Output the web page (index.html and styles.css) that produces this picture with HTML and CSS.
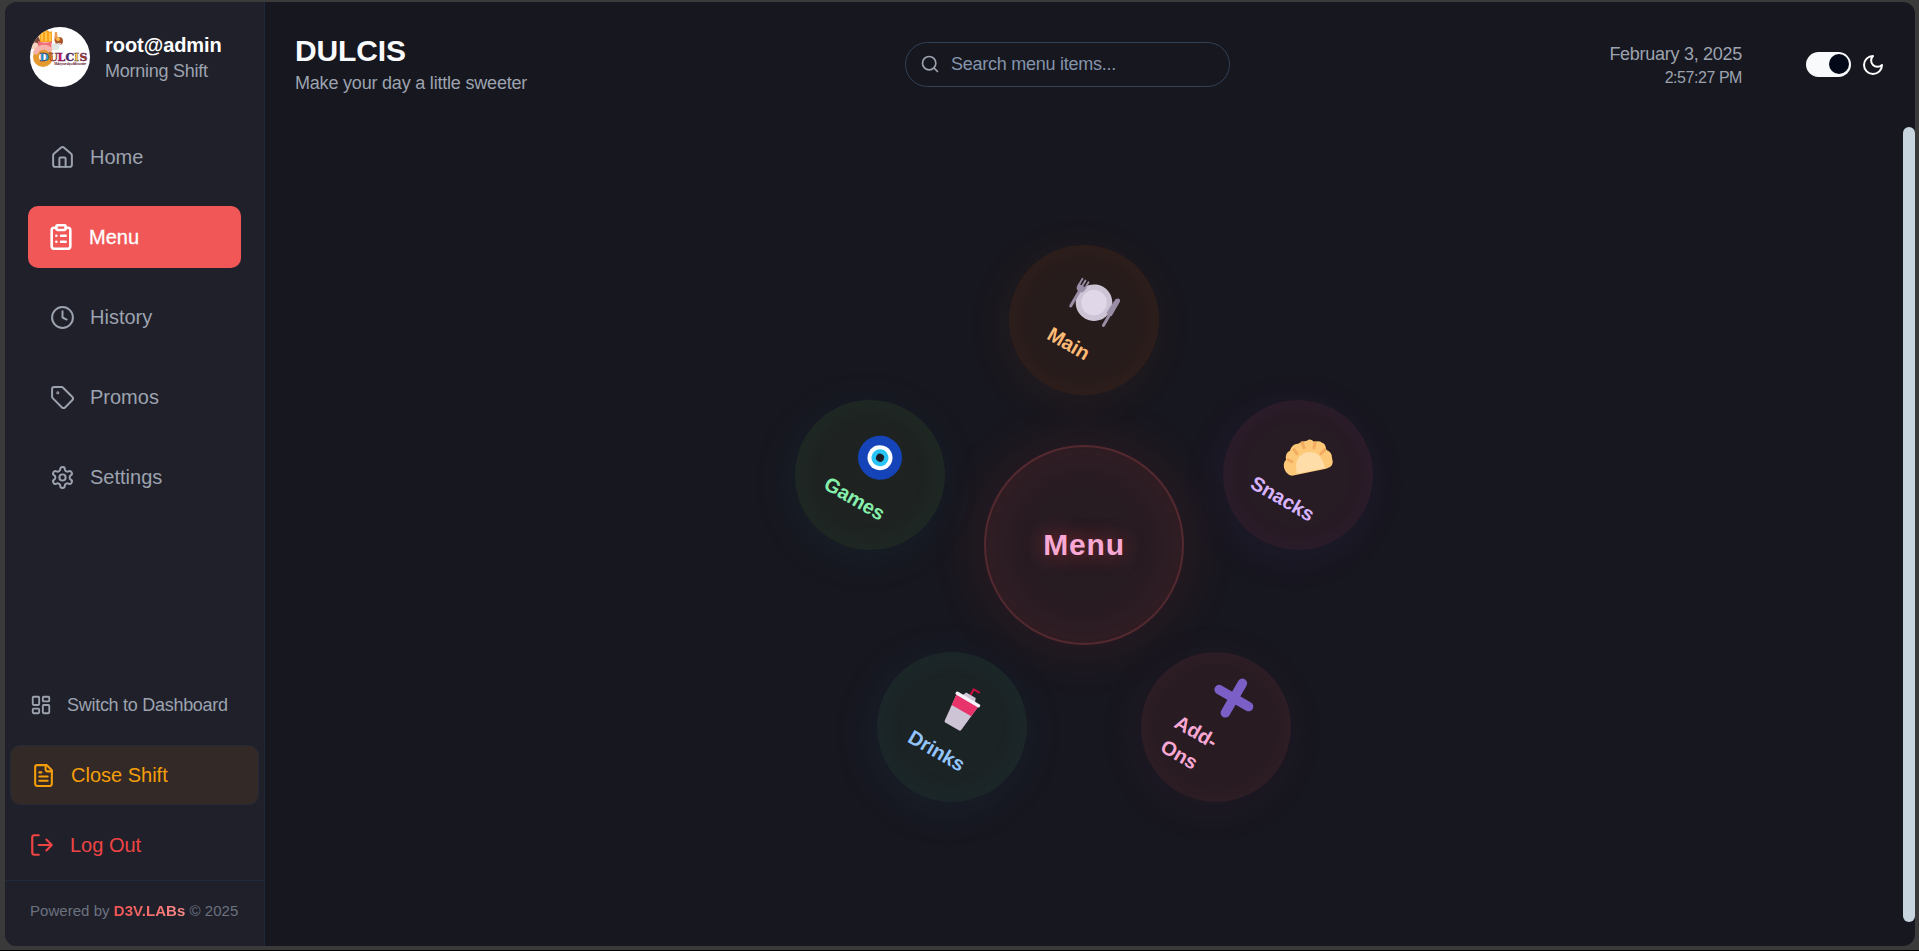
FILE: index.html
```html
<!DOCTYPE html>
<html lang="en">
<head>
<meta charset="utf-8">
<title>DULCIS</title>
<link rel="stylesheet" href="styles.css">
</head>
<body>
<div class="app">
  <aside class="sidebar">
    <div class="profile">
      <svg class="avatar" viewBox="0 0 60 60">
        <defs><clipPath id="round"><circle cx="30" cy="30" r="30"/></clipPath></defs>
        <g clip-path="url(#round)">
          <rect width="60" height="60" fill="#fff"/>
          <path d="M1 15l7-6 4 8-5 5-7-1z" fill="#7b4636"/>
          <circle cx="5" cy="19" r="3.500" fill="#f3d3bd"/>
          <path d="M9 6l2-2 3 1 3-2 3 2 2-1v11H10z" fill="#f9a21d"/>
          <path d="M12 6v8M16 5v9M20 6v8" stroke="#ffd35c" stroke-width="1.400"/>
          <path d="M8 14q8 3 14 0l-1 13H9z" fill="#f36f78"/>
          <path d="M25 5l2 0 1 9-4 0z" fill="#ef9a55"/>
          <circle cx="29" cy="14" r="4" fill="#a9562c"/>
          <path d="M21 17l10-1-3 7h-5z" fill="#dfe6e4"/>
          <circle cx="28" cy="12" r="2" fill="#f8b64b"/>
          <circle cx="13" cy="30" r="7" fill="none" stroke="#e59a2f" stroke-width="6"/>
          <path d="M5 27a9 9 0 0 1 16-3" fill="none" stroke="#f6b3ac" stroke-width="5"/>
        </g>
        <g class="avatar-word" stroke="#51204a" stroke-width=".4">
          <text x="9.500" y="33.500" fill="#1fa9dc">D</text><text x="18.500" y="33.500" fill="#ef7d28">U</text><text x="27.500" y="33.500" fill="#d90f6c">L</text><text x="35.500" y="33.500" fill="#3c2a7c">C</text><text x="44" y="33.500" fill="#f8d33b">I</text><text x="49.500" y="33.500" fill="#a43a2b">S</text>
        </g>
        <text class="avatar-tag" x="24" y="37.500" textLength="32">Make your day a little sweeter</text>
      </svg>
      <div class="who">
        <div class="user">root@admin</div>
        <div class="shift">Morning Shift</div>
      </div>
    </div>

    <nav class="nav">
      <a class="nav-item"><svg class="icon" viewBox="0 0 24 24"><path d="M15 21v-8a1 1 0 0 0-1-1h-4a1 1 0 0 0-1 1v8"/><path d="M3 10a2 2 0 0 1 .709-1.528l7-5.999a2 2 0 0 1 2.582 0l7 5.999A2 2 0 0 1 21 10v9a2 2 0 0 1-2 2H5a2 2 0 0 1-2-2z"/></svg><span>Home</span></a>
      <a class="nav-item active"><svg class="icon" viewBox="0 0 24 24"><rect width="8" height="4" x="8" y="2" rx="1"/><path d="M16 4h2a2 2 0 0 1 2 2v14a2 2 0 0 1-2 2H6a2 2 0 0 1-2-2V6a2 2 0 0 1 2-2h2M12 11h4M12 16h4M8 11h.01M8 16h.01"/></svg><span>Menu</span></a>
      <a class="nav-item"><svg class="icon" viewBox="0 0 24 24"><circle cx="12" cy="12" r="10"/><path d="M12 6v6l4 2"/></svg><span>History</span></a>
      <a class="nav-item"><svg class="icon" viewBox="0 0 24 24"><path d="M12.586 2.586A2 2 0 0 0 11.172 2H4a2 2 0 0 0-2 2v7.172a2 2 0 0 0 .586 1.414l8.704 8.704a2.426 2.426 0 0 0 3.420 0l6.580-6.580a2.426 2.426 0 0 0 0-3.420z"/><circle cx="7.500" cy="7.500" r=".5"/></svg><span>Promos</span></a>
      <a class="nav-item"><svg class="icon" viewBox="0 0 24 24"><path d="M12.220 2h-.44a2 2 0 0 0-2 2v.18a2 2 0 0 1-1 1.730l-.43.250a2 2 0 0 1-2 0l-.15-.08a2 2 0 0 0-2.730.730l-.22.380a2 2 0 0 0 .730 2.730l.150.100a2 2 0 0 1 1 1.720v.510a2 2 0 0 1-1 1.740l-.15.090a2 2 0 0 0-.73 2.730l.220.380a2 2 0 0 0 2.730.730l.150-.08a2 2 0 0 1 2 0l.430.250a2 2 0 0 1 1 1.730V20a2 2 0 0 0 2 2h.440a2 2 0 0 0 2-2v-.18a2 2 0 0 1 1-1.730l.430-.25a2 2 0 0 1 2 0l.150.080a2 2 0 0 0 2.730-.73l.220-.39a2 2 0 0 0-.73-2.730l-.15-.08a2 2 0 0 1-1-1.740v-.5a2 2 0 0 1 1-1.740l.150-.09a2 2 0 0 0 .730-2.730l-.22-.38a2 2 0 0 0-2.730-.73l-.15.080a2 2 0 0 1-2 0l-.43-.25a2 2 0 0 1-1-1.730V4a2 2 0 0 0-2-2z"/><circle cx="12" cy="12" r="3"/></svg><span>Settings</span></a>
    </nav>

    <div class="actions">
      <a class="action switch-view"><svg class="icon" viewBox="0 0 24 24"><rect width="7" height="9" x="3" y="3" rx="1"/><rect width="7" height="5" x="14" y="3" rx="1"/><rect width="7" height="9" x="14" y="12" rx="1"/><rect width="7" height="5" x="3" y="16" rx="1"/></svg><span>Switch to Dashboard</span></a>
      <a class="action close-shift"><svg class="icon" viewBox="0 0 24 24"><path d="M15 2H6a2 2 0 0 0-2 2v16a2 2 0 0 0 2 2h12a2 2 0 0 0 2-2V7z"/><path d="M14 2v4a2 2 0 0 0 2 2h4M10 9H8M16 13H8M16 17H8"/></svg><span>Close Shift</span></a>
      <a class="action logout"><svg class="icon" viewBox="0 0 24 24"><path d="M9 21H5a2 2 0 0 1-2-2V5a2 2 0 0 1 2-2h4M16 17l5-5-5-5M21 12H9"/></svg><span>Log Out</span></a>
    </div>
    <footer class="credit">Powered by <b>D3V.LABs</b> © 2025</footer>
  </aside>

  <main class="main">
    <header class="header">
      <div class="brand">
        <h1>DULCIS</h1>
        <p>Make your day a little sweeter</p>
      </div>
      <div class="search"><svg class="icon" viewBox="0 0 24 24"><circle cx="11" cy="11" r="8"/><path d="m21 21-4.300-4.300"/></svg><span>Search menu items...</span></div>
      <div class="tools">
        <div class="clock"><div class="date">February 3, 2025</div><div class="time">2:57:27 PM</div></div>
        <div class="toggle"><i></i></div>
        <svg class="icon moon" viewBox="0 0 24 24"><path d="M12 3a6 6 0 0 0 9 9 9 9 0 1 1-9-9Z"/></svg>
      </div>
    </header>

    <section class="wheel">
      <div class="hub">Menu</div>

      <div class="node dish">
        <svg class="emoji" viewBox="-24 -24 48 48">
          <circle r="18.300" fill="#cdc4d6"/><circle r="12.800" fill="#e0d8e9"/>
          <g fill="none" stroke="#998ea5" stroke-linecap="round"><path d="M-18.500 14.500V-4" stroke-width="3"/><path d="M-22-15v7M-18.500-15v7M-15-15v7" stroke-width="1.800"/><path d="M19.500 15V-2" stroke-width="3"/></g>
          <path d="M-23-9h9v2q0 5-4.500 5T-23-7zM17-14q3-4 5 0V3h-6V-4z" fill="#998ea5"/>
        </svg>
        <span class="label">Main</span>
      </div>

      <div class="node snacks">
        <svg class="emoji" viewBox="-24 -24 48 48">
          <g transform="rotate(-30)">
            <path d="M-16 18Q-22 17-24 10Q-25 5-22 2Q-23-5-18-7Q-16-14-10-14Q-5-17-1-17Q2-20 6-16Q12-17 14-15Q18-14 18-8Q24-6 24 0Q27 9 18 11Z" fill="#fdc878"/>
            <path d="M-11 16Q-15-2-1-5.500Q13-8 17 10.500Z" fill="#ffdda8"/>
            <path d="M-20 2l4 2M-14-8l3 4M-6-15l2 5M7-15l-1 5M17-8l-4 4" stroke="#f3ab60" stroke-width="3" stroke-linecap="round"/>
          </g>
        </svg>
        <span class="label">Snacks</span>
      </div>

      <div class="node addons">
        <svg class="emoji" viewBox="-24 -24 48 48"><path d="M1-17V17M-16 0H18" stroke="#7b5fc6" stroke-width="9.500" stroke-linecap="round"/></svg>
        <span class="label">Add-Ons</span>
      </div>

      <div class="node drinks">
        <svg class="emoji" viewBox="-24 -24 48 48">
          <path d="M0-16v-7.500h6" fill="none" stroke="#c3103f" stroke-width="2.200" stroke-linecap="round" stroke-linejoin="round"/>
          <path d="M-7-12l2-5H6l2 5z" fill="#cdc4d6"/>
          <path d="M-12.500-11h25L9.500 18q-.2 1.500-1.500 1.500H-8q-1.300 0-1.500-1.500z" fill="#cdc4d6"/>
          <path d="M-12.500-11h25L11.300 1h-22.600z" fill="#e8336b"/>
          <rect x="-14" y="-13.500" width="28" height="3.500" rx="1.700" fill="#f7f2fa"/>
        </svg>
        <span class="label">Drinks</span>
      </div>

      <div class="node games">
        <svg class="emoji" viewBox="-24 -24 48 48"><circle r="22" fill="#1444b8"/><circle r="12.500" fill="#fff"/><circle r="8.500" fill="#27c4f5"/><circle r="4" fill="#1c1c24"/></svg>
        <span class="label">Games</span>
      </div>
    </section>
  </main>
  <div class="scrollbar"></div>
</div>
</body>
</html>
```
FILE: styles.css
```css
* { box-sizing: border-box; }

body {
  margin: 0;
  height: 951px;
  padding: 2px 4px 5px 5px;
  overflow: hidden;
  background: #3a3a3a;
  border-bottom: 1px solid #000;
  font-family: "Liberation Sans", Arial, sans-serif;
  color: #9ca3af;
}

.app {
  display: flex;
  position: relative;
  height: 944px;
  border-radius: 12px;
  overflow: hidden;
  background: #17171f;
}

.icon {
  flex: none;
  width: 24px;
  height: 24px;
  fill: none;
  stroke: currentColor;
  stroke-width: 2;
  stroke-linecap: round;
  stroke-linejoin: round;
}

/* Sidebar */
.sidebar {
  display: flex;
  flex-direction: column;
  flex: none;
  width: 260px;
  background: #20202a;
  border-right: 1px solid #1e293b;
}

.profile {
  display: flex;
  align-items: center;
  gap: 15px;
  padding: 25px 25px 0;
}

.avatar { flex: none; width: 60px; height: 60px; }
.avatar-word { font: bold 11px "DejaVu Serif", serif; }
.avatar-tag { font: italic bold 3.5px "Liberation Serif", serif; fill: #6b2330; }

.who { padding-top: 3px; }

.user {
  font-size: 20px;
  line-height: 26px;
  font-weight: 700;
  letter-spacing: -.05px;
  color: #fff;
}

.shift { font-size: 18px; line-height: 27px; letter-spacing: -.25px; }

.nav {
  display: flex;
  flex-direction: column;
  gap: 18px;
  padding: 39px 23px 0 23px;
}

.nav-item {
  display: flex;
  align-items: center;
  gap: 15px;
  height: 62px;
  padding-left: 22px;
  border-radius: 10px;
  font-size: 20px;
}

.nav-item .icon { width: 25px; height: 25px; stroke-width: 1.9; }
.nav-item.active { gap: 14px; padding-left: 19px; background: #f15757; color: #fff; -webkit-text-stroke: .3px #fff; }
.nav-item.active .icon { width: 28px; height: 28px; stroke-width: 2.2; }

.actions { display: flex; flex-direction: column; margin-top: auto; }

.action { display: flex; align-items: center; font-size: 20px; }

.switch-view { gap: 15px; height: 60px; padding-left: 25px; margin-bottom: 10px; font-size: 18px; letter-spacing: -.28px; }
.switch-view .icon { width: 22px; height: 22px; }

.close-shift {
  gap: 15px;
  height: 60px;
  margin: 0 5px;
  padding-left: 20px;
  border: 1px solid #252a38;
  border-radius: 10px;
  background: #332926;
  color: #f59e0b;
}

.close-shift .icon { width: 25px; height: 25px; }

.logout { gap: 15px; height: 60px; margin: 10px 0 5px; padding-left: 24px; color: #ef4444; }
.logout .icon { width: 26px; height: 26px; }

.credit {
  height: 66px;
  padding: 20px 0 0 25px;
  border-top: 1px solid #1e293b;
  font-size: 15px;
  line-height: 20px;
  letter-spacing: .04px;
  color: #6b7280;
}

.credit b {
  background: linear-gradient(90deg, #ef5350, #fb8a8a);
  -webkit-background-clip: text;
  background-clip: text;
  color: transparent;
}

/* Header */
.main { flex: 1; display: flex; flex-direction: column; }

.header {
  display: grid;
  grid-template-columns: 610px 325px 1fr;
  align-items: center;
  height: 124px;
  padding: 0 30px;
}

.brand { padding-top: 3px; }
.brand h1 { margin: 0; font-size: 30px; line-height: 36px; letter-spacing: -.15px; color: #f9fafb; }
.brand p { margin: 0; font-size: 18px; line-height: 29px; letter-spacing: -.2px; }

.search {
  display: flex;
  align-items: center;
  gap: 11px;
  height: 45px;
  padding-left: 14px;
  border: 1px solid #334155;
  border-radius: 23px;
  font-size: 18px;
  letter-spacing: -.25px;
  color: #8494ab;
}

.search .icon { width: 20px; height: 20px; color: #9ca3af; }

.tools { display: flex; align-items: center; justify-content: flex-end; }
.clock { text-align: right; margin-right: 64px; padding-top: 1px; }
.date { font-size: 18px; line-height: 25px; letter-spacing: -.28px; }
.time { font-size: 16px; line-height: 21px; letter-spacing: -.45px; }

.toggle {
  display: flex;
  justify-content: flex-end;
  align-items: center;
  width: 45px;
  height: 25px;
  padding: 2.5px;
  margin-right: 10px;
  border-radius: 13px;
  background: #f8fafc;
}

.toggle i { width: 20px; height: 20px; border-radius: 50%; background: #020817; }
.moon { width: 24px; height: 24px; margin-top: 1px; color: #fff; }

/* Radial category menu */
.wheel { position: relative; flex: 1; }

.hub, .node {
  position: absolute;
  display: flex;
  align-items: center;
  justify-content: center;
  border-radius: 50%;
}

.hub {
  left: 719px;
  top: 319px;
  width: 200px;
  height: 200px;
  border: 2px solid #54292f;
  background: #281c23;
  box-shadow: 0 0 60px rgba(239, 68, 68, .12), inset 0 0 50px rgba(239, 68, 68, .08);
  font-size: 30px;
  font-weight: 700;
  letter-spacing: .8px;
  color: #f9a8d4;
  text-shadow: 0 0 20px rgba(239, 68, 68, .5);
}

.node {
  flex-direction: column;
  width: 150px;
  height: 150px;
  transform: rotate(30deg);
  font-size: 20px;
  line-height: 28px;
  font-weight: 700;
}

.emoji { flex: none; width: 48px; height: 48px; margin: -2px 0 10px; overflow: visible; }
.label { max-width: 72px; margin-right: 3px; letter-spacing: -.1px; }

.dish { left: 744px; top: 119px; color: #fdba74; background: #271c1c; box-shadow: 0 8px 50px rgba(249, 115, 22, .06), inset 0 0 30px rgba(249, 115, 22, .05); }
.snacks { left: 958px; top: 274px; color: #d8b4fe; background: #271b24; box-shadow: 0 8px 50px rgba(168, 85, 247, .06), inset 0 0 30px rgba(192, 60, 220, .06); }
.addons { left: 876px; top: 526px; color: #f9a8d4; background: #281c22; box-shadow: 0 8px 50px rgba(180, 60, 160, .06), inset 0 0 30px rgba(236, 72, 113, .05); }
.drinks { left: 612px; top: 526px; color: #93c5fd; background: #1c2325; box-shadow: 0 8px 50px rgba(34, 140, 190, .08), inset 0 0 30px rgba(34, 150, 160, .07); }
.games { left: 530px; top: 274px; color: #86efac; background: #1e2321; box-shadow: 0 8px 50px rgba(34, 140, 170, .07), inset 0 0 30px rgba(60, 170, 110, .07); }

/* Overlays the right edge of the content */
.scrollbar {
  position: absolute;
  right: 0;
  top: 125px;
  width: 12px;
  height: 795px;
  border-radius: 6px;
  background: #c8d5df;
}
```
